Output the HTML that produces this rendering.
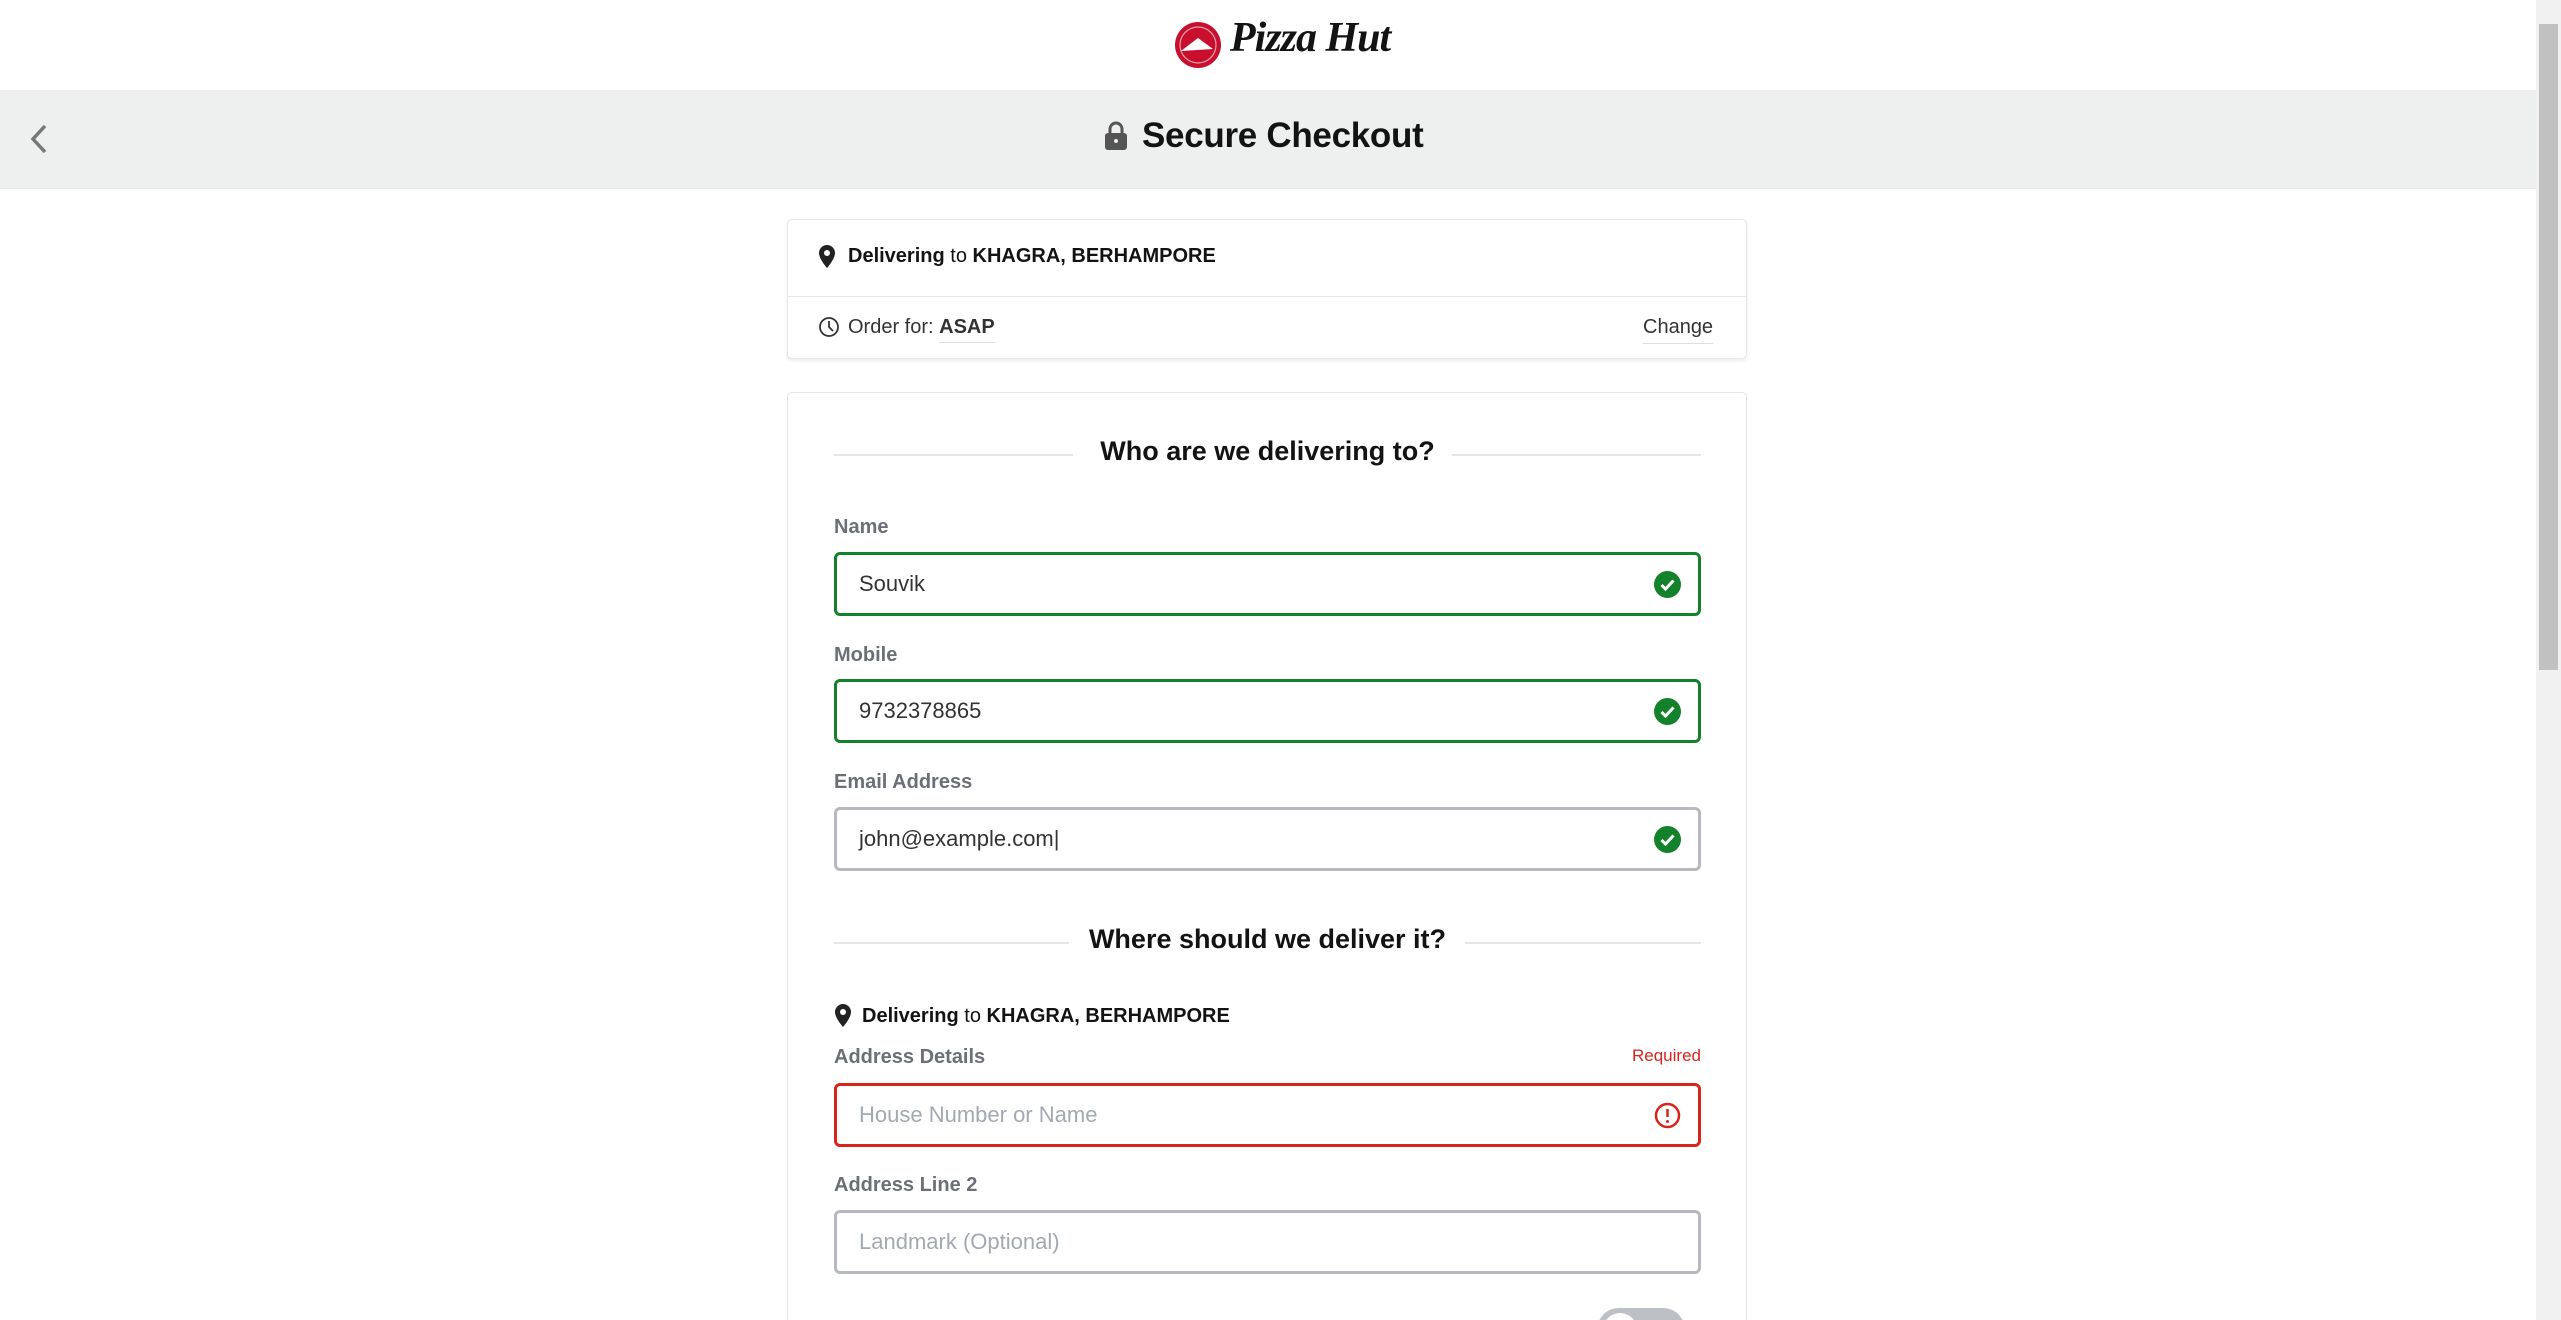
<!DOCTYPE html>
<html style="height:1320px;overflow:hidden"><head><meta charset="utf-8"><style>
*{box-sizing:border-box;margin:0;padding:0}
body{width:2561px;height:1320px;overflow:hidden;background:#fff;font-family:"Liberation Sans",sans-serif;color:#131313}
#w{position:relative;width:2561px;height:1320px;overflow:hidden}
.abs{position:absolute}
.band{left:0;top:90px;width:2536px;height:99px;background:#eeefef;border-bottom:1px solid #e2e2e2}
.sb{left:2536px;top:0;width:25px;height:1320px;background:#f1f1f1}
.thumb{left:2539px;top:24px;width:19px;height:646px;background:#c1c1c1}
.card{border:1px solid #e6e6e6;border-radius:5px;background:#fff}
.lbl{font-size:20px;color:#6b6f77;font-weight:bold}
.inp{left:834px;width:867px;height:64px;border:3px solid #b6b9bd;border-radius:6px;font-size:22px;color:#333;padding-left:22px;line-height:58px}
.ok{border-color:#13822b}
.err{border-color:#d9241c}
.ph{color:#a3a9b2}
.chk{position:absolute;right:17px;top:16px;width:27px;height:27px}
.h{font-size:27px;font-weight:bold;text-align:center;width:867px;left:834px}
.line{height:2px;background:#e3e5e8}
</style></head><body><div id="w">
<svg class="abs" style="left:1173px;top:20px" width="50" height="50" viewBox="0 0 50 50"><circle cx="25" cy="25" r="23" fill="#c8102e"/><circle cx="25" cy="25" r="18" fill="none" stroke="#fff" stroke-width="1.2" opacity=".6"/><path d="M8 31 L25 18 L40 29 Z" fill="#fff"/></svg>
<div class="abs" style="left:1230px;top:14px;font-size:42px;font-style:italic;font-weight:bold;font-family:'Liberation Serif',serif;letter-spacing:-1px">Pizza Hut</div>
<div class="abs band"></div>
<svg class="abs" style="left:28px;top:124px" width="22" height="30" viewBox="0 0 22 30"><path d="M17 2 L5 15 L17 28" fill="none" stroke="#777" stroke-width="3.5"/></svg>
<svg class="abs" style="left:1104px;top:121px" width="24" height="30" viewBox="0 0 24 30"><path d="M6 12 V8 a6 6 0 0 1 12 0 V12" fill="none" stroke="#555" stroke-width="3"/><rect x="1" y="12" width="22" height="17" rx="3" fill="#555"/><circle cx="12" cy="20" r="2" fill="#eee"/></svg>
<div class="abs" style="left:1142px;top:116px;font-size:35px;font-weight:bold;color:#131313;letter-spacing:-0.3px">Secure Checkout</div>
<div class="abs sb"></div><div class="abs thumb"></div>

<div class="abs card" style="left:787px;top:219px;width:960px;height:140px;box-shadow:0 2px 3px rgba(0,0,0,.08)"></div>
<div class="abs" style="left:788px;top:296px;width:958px;height:1px;background:#e6e6e6"></div>
<svg class="abs" style="left:818px;top:244px" width="18" height="25" viewBox="0 0 18 25"><path d="M9 1 a8 8 0 0 1 8 8 c0 6 -8 15 -8 15 s-8 -9 -8 -15 a8 8 0 0 1 8 -8z" fill="#222"/><circle cx="9" cy="9" r="3" fill="#fff"/></svg>
<div class="abs" style="left:848px;top:245px;font-size:20px"><b>Delivering</b> to <b>KHAGRA, BERHAMPORE</b></div>
<svg class="abs" style="left:818px;top:316px" width="22" height="22" viewBox="0 0 22 22"><circle cx="11" cy="11" r="9" fill="none" stroke="#333" stroke-width="1.8"/><path d="M11 5 V11 L15 15" fill="none" stroke="#333" stroke-width="1.8"/></svg>
<div class="abs" style="left:848px;top:316px;font-size:20px;color:#333">Order for: <b style="border-bottom:1px solid #ddd;padding-bottom:4px">ASAP</b></div>
<div class="abs" style="left:1643px;top:316px;font-size:20px;color:#333;border-bottom:1px solid #ddd;padding-bottom:4px">Change</div>

<div class="abs card" style="left:787px;top:392px;width:960px;height:928px;border-bottom:none;border-radius:5px 5px 0 0"></div>
<div class="abs line" style="left:834px;top:454px;width:239px"></div>
<div class="abs line" style="left:1452px;top:454px;width:249px"></div>
<div class="abs h" style="top:436px">Who are we delivering to?</div>

<div class="abs lbl" style="left:834px;top:516px">Name</div>
<div class="abs inp ok" style="top:552px">Souvik<svg class="chk" viewBox="0 0 27 27"><circle cx="13.5" cy="13.5" r="13.5" fill="#13822b"/><path d="M7.5 14 L11.5 18 L19.5 9.5" fill="none" stroke="#fff" stroke-width="3"/></svg></div>
<div class="abs lbl" style="left:834px;top:644px">Mobile</div>
<div class="abs inp ok" style="top:679px">9732378865<svg class="chk" viewBox="0 0 27 27"><circle cx="13.5" cy="13.5" r="13.5" fill="#13822b"/><path d="M7.5 14 L11.5 18 L19.5 9.5" fill="none" stroke="#fff" stroke-width="3"/></svg></div>
<div class="abs lbl" style="left:834px;top:771px">Email Address</div>
<div class="abs inp" style="top:807px">john@example.com|<svg class="chk" viewBox="0 0 27 27"><circle cx="13.5" cy="13.5" r="13.5" fill="#13822b"/><path d="M7.5 14 L11.5 18 L19.5 9.5" fill="none" stroke="#fff" stroke-width="3"/></svg></div>

<div class="abs line" style="left:834px;top:942px;width:235px"></div>
<div class="abs line" style="left:1465px;top:942px;width:236px"></div>
<div class="abs h" style="top:924px">Where should we deliver it?</div>

<svg class="abs" style="left:834px;top:1003px" width="18" height="25" viewBox="0 0 18 25"><path d="M9 1 a8 8 0 0 1 8 8 c0 6 -8 15 -8 15 s-8 -9 -8 -15 a8 8 0 0 1 8 -8z" fill="#222"/><circle cx="9" cy="9" r="3" fill="#fff"/></svg>
<div class="abs" style="left:862px;top:1005px;font-size:20px"><b>Delivering</b> to <b>KHAGRA, BERHAMPORE</b></div>
<div class="abs lbl" style="left:834px;top:1046px">Address Details</div>
<div class="abs" style="left:1600px;top:1046px;width:101px;text-align:right;font-size:17px;color:#d9241c">Required</div>
<div class="abs inp err ph" style="top:1083px">House Number or Name<svg class="chk" viewBox="0 0 27 27"><circle cx="13.5" cy="13.5" r="11.5" fill="none" stroke="#d9241c" stroke-width="2.5"/><path d="M13.5 7 V15" stroke="#d9241c" stroke-width="2.5"/><circle cx="13.5" cy="19.5" r="1.5" fill="#d9241c"/></svg></div>
<div class="abs lbl" style="left:834px;top:1174px">Address Line 2</div>
<div class="abs inp ph" style="top:1210px">Landmark (Optional)</div>
<svg class="abs" style="left:1597px;top:1308px" width="88" height="12" viewBox="0 0 88 12"><rect x="0" y="0" width="88" height="44" rx="22" fill="#bdc1c5"/><circle cx="23" cy="22" r="17" fill="#fff"/></svg>
</div></body></html>
